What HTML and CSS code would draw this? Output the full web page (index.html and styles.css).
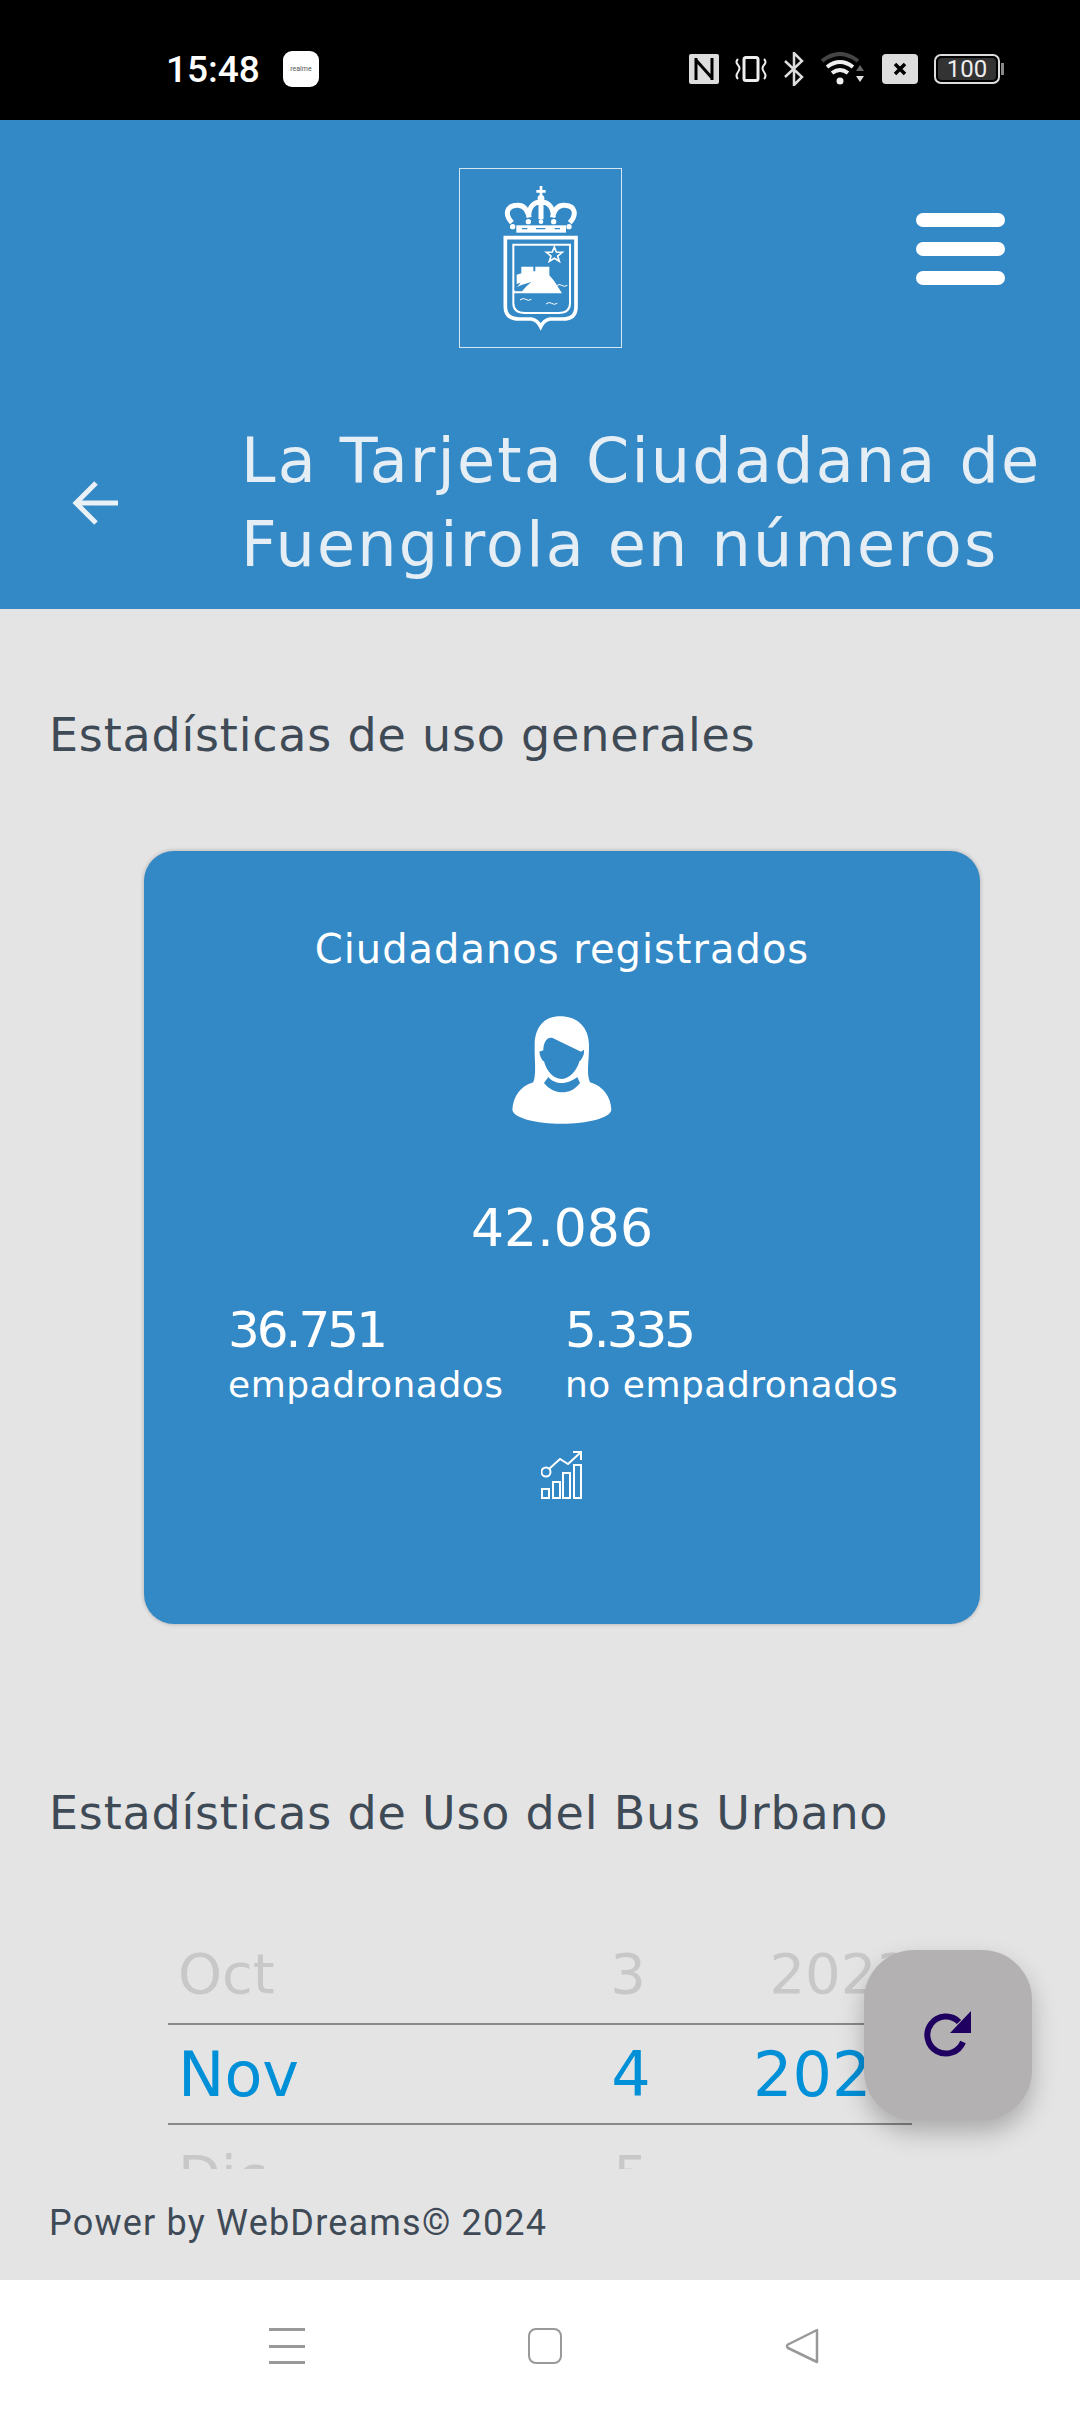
FILE: index.html
```html
<!DOCTYPE html>
<html lang="es">
<head>
  <meta charset="UTF-8">
  <title>La Tarjeta Ciudadana de Fuengirola en números</title>
  <link rel="stylesheet" href="styles.css">
</head>
<body>
<div class="app">

  <div class="status-bar">
    <span class="time">15:48</span>
    <span class="notif">realme</span>
    <div class="status-icons">
      <svg width="30" height="30" viewBox="0 0 30 30"><rect width="30" height="30" rx="2" fill="#ddd"/><path d="M7 4v22M23 4v22M7 6l16 18" stroke="#000" stroke-width="3" fill="none"/></svg>
      <svg width="32" height="26" viewBox="0 0 32 26"><rect x="9" y="1.500" width="14" height="23" rx="2" fill="none" stroke="#eee" stroke-width="3"/><path d="M3 3q-3 3 0 6t0 7 0 7M29 3q3 3 0 6t0 7 0 7" fill="none" stroke="#eee" stroke-width="2"/></svg>
      <svg width="22" height="34" viewBox="0 0 22 34"><path d="M2 9l17 16-8 8V1l8 8L2 25" fill="none" stroke="#ddd" stroke-width="2.500"/></svg>
      <svg width="45" height="34" viewBox="0 0 45 34"><path d="M1 9q18-14 36 0" fill="none" stroke="#444" stroke-width="4"/><path d="M6 15q13-10 26 0M11 21q8-6 16 0" fill="none" stroke="#eee" stroke-width="4"/><circle cx="19" cy="29" r="3.500" fill="#eee"/><path d="M35 19l4-6 4 6z" fill="#666"/><path d="M35 24l4 6 4-6z" fill="#ddd"/></svg>
      <svg width="36" height="30" viewBox="0 0 36 30"><rect width="36" height="30" rx="4" fill="#ddd"/><path d="M13 10l10 10M23 10L13 20" stroke="#000" stroke-width="3.500"/></svg>
      <div class="battery"><span class="battery-level">100</span></div>
    </div>
  </div>

  <header class="header">
    <div class="header-top">
      <div class="logo">
        <svg width="163" height="179" viewBox="87 54 489 537">
          <path d="M333 108v42M319 124h28" stroke="#fff" stroke-width="8" fill="none"/>
          <circle cx="333" cy="145" r="10" fill="#fff"/>
          <path d="M246 218c-22-24-18-50 14-52 20-2 32 12 38 36M419 218c22-24 18-50-14-52-20-2-32 12-38 36M296 202c0-28 12-46 37-46s37 18 37 46M333 156v52" fill="none" stroke="#fff" stroke-width="15"/>
          <circle cx="248" cy="230" r="8" fill="#fff"/><circle cx="295" cy="215" r="8" fill="#fff"/><circle cx="333" cy="215" r="7" fill="#fff"/><circle cx="371" cy="215" r="8" fill="#fff"/><circle cx="417" cy="230" r="8" fill="#fff"/>
          <rect x="259" y="226" width="149" height="22" fill="#fff"/>
          <path d="M318 236h28M276 236h16M374 236h16" stroke="#3388c6" stroke-width="4"/>
          <path d="M226 263H438V470Q438 507 398 507H360Q342 510 332 530 322 510 304 507H268Q226 507 226 470Z" fill="none" stroke="#fff" stroke-width="11"/>
          <path d="M250 284H420V460Q420 489 385 489H285Q250 489 250 460Z" fill="none" stroke="#fff" stroke-width="6"/>
          <path d="M373 291l6 15 18 1-14 11 5 16-15-9-15 9 5-16-14-11 18-1z" fill="none" stroke="#fff" stroke-width="5"/>
          <path d="M260 402V374l14-4V350H310V364H316V350H358V376L372 392 396 430H252V422L272 398Z" fill="#fff"/>
          <path d="M254 414Q280 402 304 396 288 408 276 424H254Z" fill="#3388c6"/>
          <path d="M378 408q10-8 17-2t17 0M270 450q10-8 17-2t17 0M348 462q10-8 17-2t17 0" stroke="#fff" stroke-width="3" fill="none"/>
        </svg>
      </div>
      <div class="menu"><span></span><span></span><span></span></div>
    </div>
    <div class="header-title">
      <svg class="back" width="48" height="46" viewBox="0 0 48 46"><path d="M46 23H4M24 3L4 23l20 20" fill="none" stroke="#e9f0f6" stroke-width="5"/></svg>
      <h1>La Tarjeta Ciudadana de Fuengirola en números</h1>
    </div>
  </header>

  <main class="content">
    <h2 class="section-title">Estadísticas de uso generales</h2>

    <section class="card">
      <h3 class="card-title">Ciudadanos registrados</h3>
      <svg class="person" width="100" height="110" viewBox="96 78 300 326">
        <path fill="#fff" d="M240 80C190 80 165 115 164 165 163 215 170 250 160 278 120 290 100 320 97 360 100 385 170 402 245 402 320 402 392 385 394 360 392 320 370 290 330 278 318 250 328 210 327 165 326 115 295 80 240 80Z"/>
        <path fill="#3388c6" d="M218 145C200 140 190 160 190 182L178 186C180 200 186 212 192 215 200 245 220 268 245 268 270 268 292 240 298 215 305 210 314 195 312 180L303 186Z"/>
        <path fill="#3388c6" d="M205 262C215 275 230 280 245 280 262 280 280 272 292 262L300 280C285 300 265 308 247 308 228 308 205 298 192 280Z"/>
      </svg>
      <div class="total">42.086</div>
      <div class="split">
        <div class="split-item">
          <div class="split-num">36.751</div>
          <div class="split-label">empadronados</div>
        </div>
        <div class="split-item">
          <div class="split-num">5.335</div>
          <div class="split-label">no empadronados</div>
        </div>
      </div>
      <svg class="chart" width="42" height="48" viewBox="32 22 42 48">
        <circle cx="37" cy="43" r="4.500" fill="none" stroke="#fff" stroke-width="2"/>
        <path d="M40 40l11-10 8 5 12-11M64 23h8v8" fill="none" stroke="#fff" stroke-width="2"/>
        <path d="M33 60h7v9h-7zM44 53h7v16h-7zM54 44h7v25h-7zM65 36h7v33h-7z" fill="none" stroke="#fff" stroke-width="2"/>
      </svg>
    </section>

    <h2 class="section-title bus-title">Estadísticas de Uso del Bus Urbano</h2>

    <div class="picker">
      <div class="picker-row faded">
        <span class="col-month">Oct</span><span class="col-day">3</span><span class="col-year">2023</span>
      </div>
      <div class="picker-row selected">
        <span class="col-month">Nov</span><span class="col-day">4</span><span class="col-year">2024</span>
      </div>
      <div class="picker-row faded">
        <span class="col-month">Dic</span><span class="col-day">5</span><span class="col-year"></span>
      </div>
    </div>

    <button class="fab">
      <svg width="48" height="48" viewBox="0 0 48 48"><path d="M39 31A18.500 18.500 0 1 1 35 11" fill="none" stroke="#1f0060" stroke-width="6"/><path d="M47 0V22H26Z" fill="#1f0060"/></svg>
    </button>

    <footer class="footer">Power by WebDreams© 2024</footer>
  </main>

  <nav class="nav-bar">
    <div class="nav-menu"><span></span><span></span><span></span></div>
    <div class="nav-home"></div>
    <svg width="35" height="36" viewBox="0 0 35 36"><path d="M32 2L3 16.500Q1 18 3 20L32 34Z" fill="none" stroke="#999" stroke-width="2.500" stroke-linejoin="round"/></svg>
  </nav>

</div>
</body>
</html>
```

FILE: styles.css
```css
html, body {
  margin: 0;
  padding: 0;
}
body {
  font-family: 'DejaVu Sans', 'Liberation Sans', sans-serif;
  background: #e4e4e4;
}
.app {
  width: 1080px;
  height: 2412px;
  display: flex;
  flex-direction: column;
  overflow: hidden;
}

/* status bar */
.status-bar {
  height: 120px;
  background: #000000;
  display: flex;
  align-items: center;
  padding: 18px 80px 0 166px;
  box-sizing: border-box;
  flex-shrink: 0;
}
.time {
  font-family: 'Roboto', sans-serif;
  font-size: 37px;
  font-weight: 500;
  color: #ffffff;
  width: 94px;
}
.notif {
  margin-left: 23px;
  width: 36px;
  height: 36px;
  background: #ffffff;
  border-radius: 9px;
  font-size: 7px;
  line-height: 36px;
  text-align: center;
  color: #555555;
  font-family: 'Roboto', sans-serif;
}
.status-icons {
  margin-left: auto;
  display: flex;
  align-items: center;
  gap: 16px;
}
.battery {
  width: 66px;
  height: 30px;
  box-sizing: border-box;
  border: 2px solid #dddddd;
  border-radius: 7px;
  padding: 2px;
  position: relative;
}
.battery::after {
  content: "";
  position: absolute;
  right: -6px;
  top: 7px;
  width: 3px;
  height: 12px;
  background: #888888;
}
.battery-level {
  display: block;
  height: 100%;
  background: #333333;
  border-radius: 4px;
  color: #eeeeee;
  font-family: 'Roboto', sans-serif;
  font-size: 24px;
  line-height: 22px;
  text-align: center;
}

/* header */
.header {
  height: 489px;
  background: #3388c6;
  box-sizing: border-box;
  padding-top: 48px;
  flex-shrink: 0;
}
.header-top {
  display: grid;
  grid-template-columns: 1fr auto 1fr;
  align-items: start;
}
.logo {
  grid-column: 2;
  width: 163px;
  height: 180px;
  box-sizing: border-box;
  border: 1px solid #d5e6f3;
}
.logo svg {
  display: block;
  margin: -1px;
}
.menu {
  justify-self: end;
  margin: 45px 75px 0 0;
  display: flex;
  flex-direction: column;
  gap: 15px;
}
.menu span {
  display: block;
  width: 89px;
  height: 14px;
  background: #ffffff;
  border-radius: 7px;
}
.header-title {
  display: flex;
  align-items: center;
  padding-left: 72px;
  margin-top: 71px;
}
.back {
  flex-shrink: 0;
}
h1 {
  margin: 0 0 0 121px;
  font-size: 62px;
  font-weight: 400;
  line-height: 84px;
  letter-spacing: 2.2px;
  color: #e6eef5;
  width: 838px;
}

/* content */
.content {
  flex: 1;
  position: relative;
  background: #e4e4e4;
  overflow: hidden;
}
.section-title {
  margin: 0;
  padding: 96px 0 0 49px;
  font-size: 46px;
  line-height: 60px;
  font-weight: 400;
  letter-spacing: 0.8px;
  color: #3f4a57;
}
.bus-title {
  padding-top: 159px;
}
.card {
  margin: 86px 0 0 144px;
  width: 836px;
  height: 773px;
  box-sizing: border-box;
  background: #3388c6;
  border-radius: 30px;
  box-shadow: 0 0 4px rgba(0, 0, 0, 0.25);
  color: #ffffff;
  text-align: center;
  padding-top: 70px;
}
.card-title {
  margin: 0;
  font-size: 40px;
  font-weight: 400;
  line-height: 56px;
  letter-spacing: 1px;
}
.person {
  display: block;
  margin: 38px auto 0;
}
.total {
  margin-top: 68px;
  font-size: 52px;
  line-height: 70px;
}
.split {
  display: flex;
  margin-top: 32px;
  padding-left: 84px;
  text-align: left;
}
.split-item:first-child {
  width: 337px;
}
.split-num {
  font-size: 50px;
  line-height: 70px;
  letter-spacing: -3px;
}
.split-label {
  font-size: 36px;
  line-height: 40px;
  letter-spacing: 0.5px;
}
.chart {
  display: block;
  margin: 46px auto 0;
}

/* date picker */
.picker {
  margin: 80px 0 0 168px;
  width: 744px;
  height: 246px;
  overflow: hidden;
}
.picker-row {
  height: 100px;
  display: flex;
  align-items: center;
  white-space: nowrap;
}
.picker-row.faded {
  font-size: 56px;
  color: #c8c8c8;
}
.picker-row.selected {
  font-size: 62px;
  color: #0090d8;
  border-top: 2px solid #888888;
  border-bottom: 2px solid #888888;
  box-sizing: content-box;
  height: 98px;
}
.col-month {
  width: 408px;
  padding-left: 10px;
  box-sizing: border-box;
}
.col-day {
  width: 180px;
  text-align: center;
  margin-left: -35px;
}
.col-year {
  margin-left: 52px;
}
.selected .col-year {
  margin-left: 32px;
}

.fab {
  position: absolute;
  left: 864px;
  top: 1341px;
  width: 168px;
  height: 170px;
  border: none;
  border-radius: 50px;
  background: #b3b1b1;
  box-shadow: 0 12px 24px rgba(0, 0, 0, 0.25);
  display: flex;
  align-items: center;
  justify-content: center;
  padding: 0;
}

.footer {
  margin: 32px 0 0 49px;
  font-family: 'Roboto', sans-serif;
  font-size: 36px;
  line-height: 44px;
  letter-spacing: 1.2px;
  color: #3f4a57;
}

/* nav bar */
.nav-bar {
  height: 132px;
  background: #ffffff;
  flex-shrink: 0;
  position: relative;
  display: flex;
  align-items: center;
  padding: 0 260px 0 269px;
  justify-content: space-between;
  box-sizing: border-box;
}
.nav-menu {
  width: 36px;
  height: 36px;
  display: flex;
  flex-direction: column;
  justify-content: space-between;
}
.nav-menu span {
  height: 3px;
  background: #999999;
}
.nav-home {
  width: 34px;
  height: 36px;
  box-sizing: border-box;
  border: 2.5px solid #999999;
  border-radius: 8px;
}
```
